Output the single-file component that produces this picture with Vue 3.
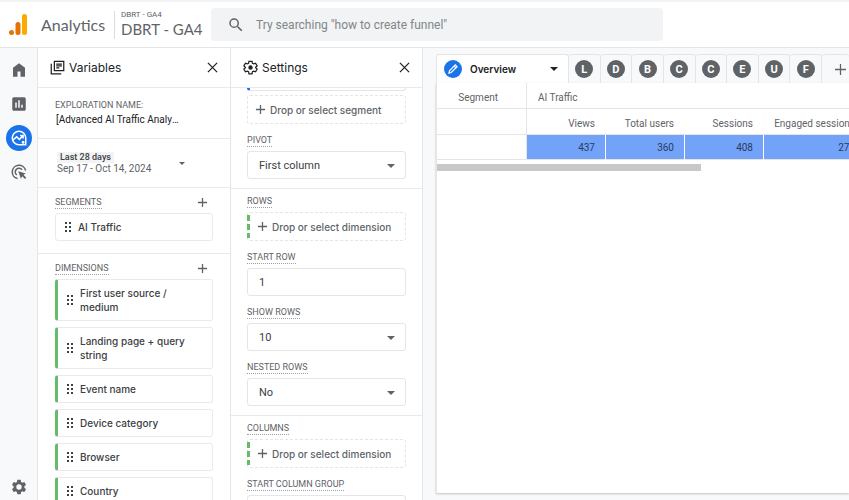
<template>
  <div class="app">
    <header class="topbar">
      <a href="#" class="brand">
        <svg class="logo" viewBox="0 0 18 22">
          <rect x="13" y="0" width="5" height="21" rx="2.5" fill="#f9ab00" />
          <rect x="6.500" y="8" width="5" height="13" rx="2.500" fill="#e37400" />
          <circle cx="2.500" cy="18.500" r="2.500" fill="#e37400" />
        </svg>
        <span>Analytics</span>
      </a>
      <div class="account">
        <span class="account-name">DBRT - GA4</span>
        <span class="property-name">DBRT - GA4</span>
      </div>
      <label class="search">
        <svg viewBox="0 0 24 24"><path d="M15.5 14h-.79l-.28-.27A6.47 6.47 0 0 0 16 9.5 6.5 6.5 0 1 0 9.500 16c1.610 0 3.090-.59 4.230-1.570l.27.28v.79l5 4.990L20.490 19l-4.990-5zm-6 0a4.500 4.500 0 1 1 0-9 4.500 4.500 0 0 1 0 9z" /></svg>
        <input type="text" aria-label="Search" placeholder="Try searching &quot;how to create funnel&quot;" />
      </label>
    </header>

    <div class="body">
      <nav class="rail">
        <a href="#" aria-label="Home">
          <svg viewBox="0 0 24 24"><path d="M4 21V9l8-6 8 6v12h-6v-7h-4v7z" /></svg>
        </a>
        <a href="#" aria-label="Reports">
          <svg viewBox="0 0 24 24"><path d="M19 3H5a2 2 0 0 0-2 2v14c0 1.100.9 2 2 2h14a2 2 0 0 0 2-2V5a2 2 0 0 0-2-2zM9 17H7v-7h2v7zm4 0h-2V7h2v10zm4 0h-2v-4h2v4z" /></svg>
        </a>
        <a href="#" class="active" aria-label="Explore">
          <svg viewBox="0 0 24 24" class="line">
            <path d="M12 3a9 9 0 1 0 0 18h9v-9a9 9 0 0 0-9-9z" />
            <path d="M4 14.500l5-4 3.500 3.500 5-5.500M13.500 8.500h4v4" />
            <circle cx="17.500" cy="17.500" r="1" />
          </svg>
        </a>
        <a href="#" aria-label="Advertising">
          <svg viewBox="0 0 24 24" class="line">
            <path d="M10 20.800A9 9 0 1 1 20.800 10" />
            <path d="M9 16A5 5 0 1 1 16 9" />
            <path d="M11 11l3.500 10 1.800-3.500 3.700 3.700 1.700-1.700-3.700-3.700L21 14z" class="solid" />
          </svg>
        </a>
        <a href="#" class="admin" aria-label="Admin">
          <svg viewBox="0 0 24 24"><path :d="gear" /></svg>
        </a>
      </nav>

      <section class="panel">
        <div class="panel-head">
          <svg viewBox="0 0 24 24" class="line dark">
            <path d="M7 2h15v15H7z" />
            <path d="M2 6v16h16" />
            <path d="M10 6.500h9M10 9.500h9M10 12.500h5" />
          </svg>
          <h2>Variables</h2>
          <button class="icon-btn" aria-label="Close variables">
            <svg viewBox="0 0 12 12"><path d="M1 1l10 10M11 1L1 11" /></svg>
          </button>
        </div>
        <div class="panel-body">
          <div class="block name-block">
            <label for="exploration" class="caps">Exploration name:</label>
            <input id="exploration" v-model="name" class="name" type="text" />
          </div>
          <button class="block date-block">
            <span class="dates">
              <span class="chip">Last 28 days</span>
              <span class="range">Sep 17 - Oct 14, 2024</span>
            </span>
            <span class="caret small"></span>
          </button>
          <div class="block">
            <div class="list-head">
              <h3 class="caps dotted">Segments</h3>
              <button class="icon-btn plus" aria-label="Add segment">
                <svg viewBox="0 0 12 12"><path d="M6 1v10M1 6h10" /></svg>
              </button>
            </div>
            <div class="item">
              <svg viewBox="0 0 8 10" class="grip"><path :d="dots" /></svg>
              <span>AI Traffic</span>
            </div>
          </div>
          <div class="block last">
            <div class="list-head">
              <h3 class="caps dotted">Dimensions</h3>
              <button class="icon-btn plus" aria-label="Add dimension">
                <svg viewBox="0 0 12 12"><path d="M6 1v10M1 6h10" /></svg>
              </button>
            </div>
            <div v-for="d in dimensions" :key="d" class="item dimension">
              <svg viewBox="0 0 8 10" class="grip"><path :d="dots" /></svg>
              <span>{{ d }}</span>
            </div>
          </div>
        </div>
      </section>

      <section class="panel settings">
        <div class="panel-head">
          <svg viewBox="0 0 24 24" class="line dark">
            <path :d="gearOutline" />
            <circle cx="12" cy="12" r="3.500" class="solid" />
          </svg>
          <h2>Settings</h2>
          <button class="icon-btn" aria-label="Close settings">
            <svg viewBox="0 0 12 12"><path d="M1 1l10 10M11 1L1 11" /></svg>
          </button>
        </div>
        <div class="panel-body">
          <div class="group first">
            <div class="segment-edge"></div>
            <button class="drop">
              <svg viewBox="0 0 12 12"><path d="M6 1v10M1 6h10" /></svg>Drop or select segment
            </button>
            <label for="pivot" class="caps dotted">Pivot</label>
            <div class="select">
              <select id="pivot"><option>First column</option></select>
              <span class="caret"></span>
            </div>
          </div>
          <div class="group">
            <h3 class="caps dotted">Rows</h3>
            <button class="drop green">
              <svg viewBox="0 0 12 12"><path d="M6 1v10M1 6h10" /></svg>Drop or select dimension
            </button>
            <label for="start" class="caps dotted">Start row</label>
            <input id="start" class="field" type="text" value="1" />
            <label for="show" class="caps dotted">Show rows</label>
            <div class="select">
              <select id="show"><option>10</option></select>
              <span class="caret"></span>
            </div>
            <label for="nested" class="caps dotted">Nested rows</label>
            <div class="select">
              <select id="nested"><option>No</option></select>
              <span class="caret"></span>
            </div>
          </div>
          <div class="group">
            <h3 class="caps dotted">Columns</h3>
            <button class="drop green">
              <svg viewBox="0 0 12 12"><path d="M6 1v10M1 6h10" /></svg>Drop or select dimension
            </button>
            <label for="colgroup" class="caps dotted">Start column group</label>
            <input id="colgroup" class="field" type="text" value="1" />
          </div>
        </div>
      </section>

      <main class="canvas">
        <div class="tabs">
          <button class="tab current">
            <span class="badge edit">
              <svg viewBox="0 0 24 24"><path d="M5 19l1-4L16 5l3 3L9 18zM14 7l3 3" /></svg>
            </span>
            <span class="tab-name">Overview</span>
            <span class="caret dark"></span>
          </button>
          <button v-for="(t, i) in tabs" :key="i" class="tab">
            <span class="badge">{{ t }}</span>
          </button>
          <button class="tab add" aria-label="Add tab">
            <svg viewBox="0 0 12 12"><path d="M6 0v12M0 6h12" /></svg>
          </button>
        </div>
        <div class="sheet">
          <table>
            <colgroup>
              <col class="c-seg" /><col class="c-num" /><col class="c-num" /><col class="c-num" /><col class="c-wide" />
            </colgroup>
            <thead>
              <tr>
                <th class="seg">Segment</th>
                <th class="traffic" colspan="4">AI Traffic</th>
              </tr>
              <tr>
                <th class="seg"></th>
                <th v-for="m in metrics" :key="m.label">{{ m.label }}</th>
              </tr>
            </thead>
            <tbody>
              <tr>
                <td class="seg"></td>
                <td v-for="m in metrics" :key="m.label" class="heat">{{ m.value }}</td>
              </tr>
            </tbody>
          </table>
          <div class="scroll"></div>
        </div>
      </main>
    </div>
  </div>
</template>

<script setup>
import { ref } from 'vue'

const name = ref('[Advanced AI Traffic Analysis')

const dimensions = [
  'First user source / medium',
  'Landing page + query string',
  'Event name',
  'Device category',
  'Browser',
  'Country',
]

const tabs = ['L', 'D', 'B', 'C', 'C', 'E', 'U', 'F']

const metrics = [
  { label: 'Views', value: 437 },
  { label: 'Total users', value: 360 },
  { label: 'Sessions', value: 408 },
  { label: 'Engaged sessions', value: 273 },
]

const dots = 'M1 0h2v2H1zM5 0h2v2H5zM1 4h2v2H1zM5 4h2v2H5zM1 8h2v2H1zM5 8h2v2H5z'

const gearOutline = 'M9.500 2h5l.6 3.200 2 1.100 3-1.100 2.500 4.300-2.400 2.100v.8l2.400 2.100-2.500 4.300-3-1.100-2 1.100-.6 3.200h-5l-.6-3.200-2-1.100-3 1.100-2.500-4.300 2.400-2.100v-.8L1.400 9.500l2.500-4.300 3 1.100 2-1.100z'

const gear = 'M19.140 12.940c.04-.3.06-.61.06-.94s-.02-.64-.07-.94l2.030-1.580a.49.49 0 0 0 .12-.61l-1.920-3.320a.49.49 0 0 0-.59-.22l-2.390.96a7 7 0 0 0-1.620-.94l-.36-2.540a.48.48 0 0 0-.48-.41h-3.840a.48.48 0 0 0-.47.41l-.36 2.540c-.59.24-1.130.57-1.620.94l-2.390-.96a.48.48 0 0 0-.59.22L2.740 8.870a.48.48 0 0 0 .12.61l2.030 1.580c-.05.3-.09.63-.09.94s.02.64.07.94l-2.030 1.580a.49.49 0 0 0-.12.61l1.920 3.320c.12.22.37.29.59.22l2.390-.96c.5.38 1.030.7 1.620.94l.36 2.540c.05.24.24.41.48.41h3.840c.24 0 .44-.17.47-.41l.36-2.540c.59-.24 1.130-.56 1.620-.94l2.390.96c.22.08.47 0 .59-.22l1.920-3.320a.48.48 0 0 0-.12-.61zM12 15.600a3.600 3.600 0 1 1 0-7.200 3.600 3.600 0 0 1 0 7.200z'
</script>

<style>
body { margin:0; background:#f8f9fa; }
</style>

<style scoped>
.app { height:100vh; display:flex; flex-direction:column; overflow:hidden; box-sizing:border-box; border-top:2px solid #f1f3f4; font-family:Roboto, "Liberation Sans", sans-serif; font-size:10px; color:#3c4043; }
.app *, .app *::before { box-sizing:border-box; }
button { margin:0; padding:0; border:0; background:none; color:inherit; font:inherit; cursor:pointer; }
input, select { margin:0; color:inherit; font:inherit; outline:none; }
h2, h3 { margin:0; font-weight:400; }
svg { display:block; flex:none; fill:currentColor; }

.topbar { flex:none; height:46px; display:flex; align-items:center; background:#fff; border-bottom:1px solid #e4e5e7; color:#5f6368; }
.brand { display:flex; align-items:center; gap:14px; width:114px; padding-left:9px; color:inherit; text-decoration:none; font-family:Lato, sans-serif; font-size:16px; }
.logo { width:18px; height:22px; }
.account { display:flex; flex-direction:column; width:91px; padding-left:6px; border-left:1px solid #dadce0; white-space:nowrap; }
.account-name { font-size:8px; line-height:8px; }
.property-name { font-family:Lato, sans-serif; font-size:15px; line-height:20px; }
.search { flex:none; width:54%; max-width:452px; height:33px; margin-left:6px; padding-left:16px; display:flex; align-items:center; gap:11px; border-radius:4px; background:#f1f3f4; }
.search svg { width:18px; height:18px; }
.search input { flex:1; padding:0; border:0; background:none; font-size:12px; }
.search input::placeholder { color:#80868b; opacity:1; }

.body { flex:1; min-height:0; display:flex; }
.rail { flex:none; width:38px; display:flex; flex-direction:column; align-items:center; gap:8px; padding-top:9px; background:#f8f9fa; border-right:1px solid #e4e5e7; }
.rail a { width:26px; height:26px; display:flex; align-items:center; justify-content:center; border-radius:50%; color:#5f6368; }
.rail svg { width:18px; height:18px; }
.rail .active { background:#1a73e8; color:#fff; }
.rail .admin { margin-top:auto; }
.line { fill:none; stroke:currentColor; stroke-width:2; }
.line .solid { fill:currentColor; stroke:none; }

.panel { flex:none; width:193px; display:flex; flex-direction:column; overflow:hidden; background:#fff; border-right:1px solid #e4e5e7; }
.settings { width:192px; }
.panel-head { flex:none; height:40px; display:flex; align-items:center; gap:4px; padding:0 12px; border-bottom:1px solid #e8eaed; color:#202124; }
.panel-head > svg { width:15px; height:15px; }
.panel-head h2 { flex:1; font-family:Inter, sans-serif; font-size:12px; }
.icon-btn svg, .drop svg, .add svg { width:11px; height:11px; fill:none; stroke:currentColor; stroke-width:1.400; }
.plus { color:#5f6368; }
.panel-body { flex:1; min-height:0; overflow:hidden; }
.caps { font-size:9px; line-height:12px; text-transform:uppercase; color:#5f6368; }
.dotted { display:block; width:fit-content; border-bottom:1px dotted #9aa0a6; }

.block { display:block; width:100%; padding:8px 17px 12px; border-bottom:1px solid #e8eaed; text-align:left; }
.last { border-bottom:0; }
.name-block { height:51px; padding-top:11px; display:flex; flex-direction:column; gap:1px; }
.name { width:127px; height:14px; padding:0 1px; border:0; font-size:10px; text-overflow:ellipsis; color:#202124; }
.date-block { height:49px; padding:0 45px 0 19px; display:flex; align-items:center; justify-content:space-between; }
.dates { display:flex; flex-direction:column; align-items:flex-start; color:#5f6368; }
.chip { padding:0 3px; background:#f1f3f4; font-size:9px; line-height:11px; font-weight:500; color:#3c4043; }
.range { line-height:12px; }
.caret { width:0; height:0; border:4px solid transparent; border-top-color:#5f6368; border-bottom:0; }
.caret.small { border-width:3px; border-bottom:0; }
.list-head { display:flex; justify-content:space-between; align-items:center; padding-right:5px; margin-bottom:4px; }
.item { display:flex; align-items:center; gap:6px; padding:6px 8px; border:1px solid #e8eaed; border-radius:3px; font-family:Inter, sans-serif; font-size:10px; font-weight:500; line-height:14px; }
.item + .item { margin-top:6px; }
.dimension { border-left:3px solid #66bb6a; }
.grip { width:8px; height:10px; }

.group { padding:6px 16px 9px; border-bottom:1px solid #e8eaed; }
.group.first { padding-top:0; }
.segment-edge { height:3px; margin-bottom:4px; border:1px solid #e4e5e7; border-top:0; border-left:3px solid #1a73e8; border-radius:0 0 3px 3px; }
.group .caps { margin:10px 0 4px; }
.group h3.caps { margin-top:0; }
.drop { position:relative; width:100%; height:29px; display:flex; align-items:center; gap:4px; padding-left:7px; border:1px dashed #e4e5e7; border-radius:3px; font-family:Inter, sans-serif; font-weight:500; color:#5f6368; }
.green { padding-left:9px; }
.green::before { content:""; position:absolute; left:-1px; top:2px; bottom:2px; width:3px; background:repeating-linear-gradient(#66bb6a 0 6px, transparent 6px 9px); }
.select { position:relative; }
.select .caret { position:absolute; right:11px; top:13px; pointer-events:none; }
.select select, .field { display:block; width:100%; height:28px; padding:0 11px; border:1px solid #e4e5e7; border-radius:3px; background:#fff; appearance:none; font-size:11px; }

.canvas { flex:1; min-width:0; display:flex; flex-direction:column; padding:6px 0 7px 13px; background:#f8f9fa; overflow:hidden; }
.tabs { flex:none; height:29px; display:flex; }
.tab { flex:1; min-width:0; display:flex; align-items:center; justify-content:center; border:1px solid #e4e5e7; border-width:1px 1px 0 0; border-radius:3px 3px 0 0; }
.tab.current { flex:none; width:133px; padding:0 10px 0 7px; gap:8px; border-left-width:1px; background:#fff; }
.tab-name { flex:1; text-align:left; font-family:Inter, sans-serif; font-weight:600; color:#202124; }
.tab .caret.dark { border-top-color:#202124; }
.tab.add { flex:none; width:27px; padding-left:9px; border-right:0; color:#5f6368; }
.badge { width:18px; height:18px; display:flex; align-items:center; justify-content:center; border-radius:50%; background:#5f6368; color:#fff; font-size:11px; font-weight:700; }
.edit { background:#1a73e8; }
.edit svg { width:14px; height:14px; fill:none; stroke:#fff; stroke-width:2; }
.sheet { flex:1; overflow:hidden; background:#fff; border-left:1px solid #e4e5e7; box-shadow:0 1px 2px #bdc1c6; }
table { width:429px; table-layout:fixed; border-collapse:separate; border-spacing:0; color:#5f6368; }
.c-seg { width:90px; }
.c-num { width:79px; }
.c-wide { width:102px; }
th, td { height:25px; padding:0 11px 0 0; font-weight:400; font-size:10px; text-align:right; border-bottom:1px solid #e4e5e7; box-sizing:border-box; white-space:nowrap; }
.seg { padding-right:28px; border-right:1px solid #e4e5e7; }
th.traffic { padding-left:11px; text-align:left; }
th { height:26px; padding-top:3px; }
.heat { padding-right:10px; background:#73a3f9; color:#2a3b5c; border-right:1px solid #fff; }
.scroll { width:64%; height:7px; margin-top:4px; background:#c8c8c8; }
</style>
